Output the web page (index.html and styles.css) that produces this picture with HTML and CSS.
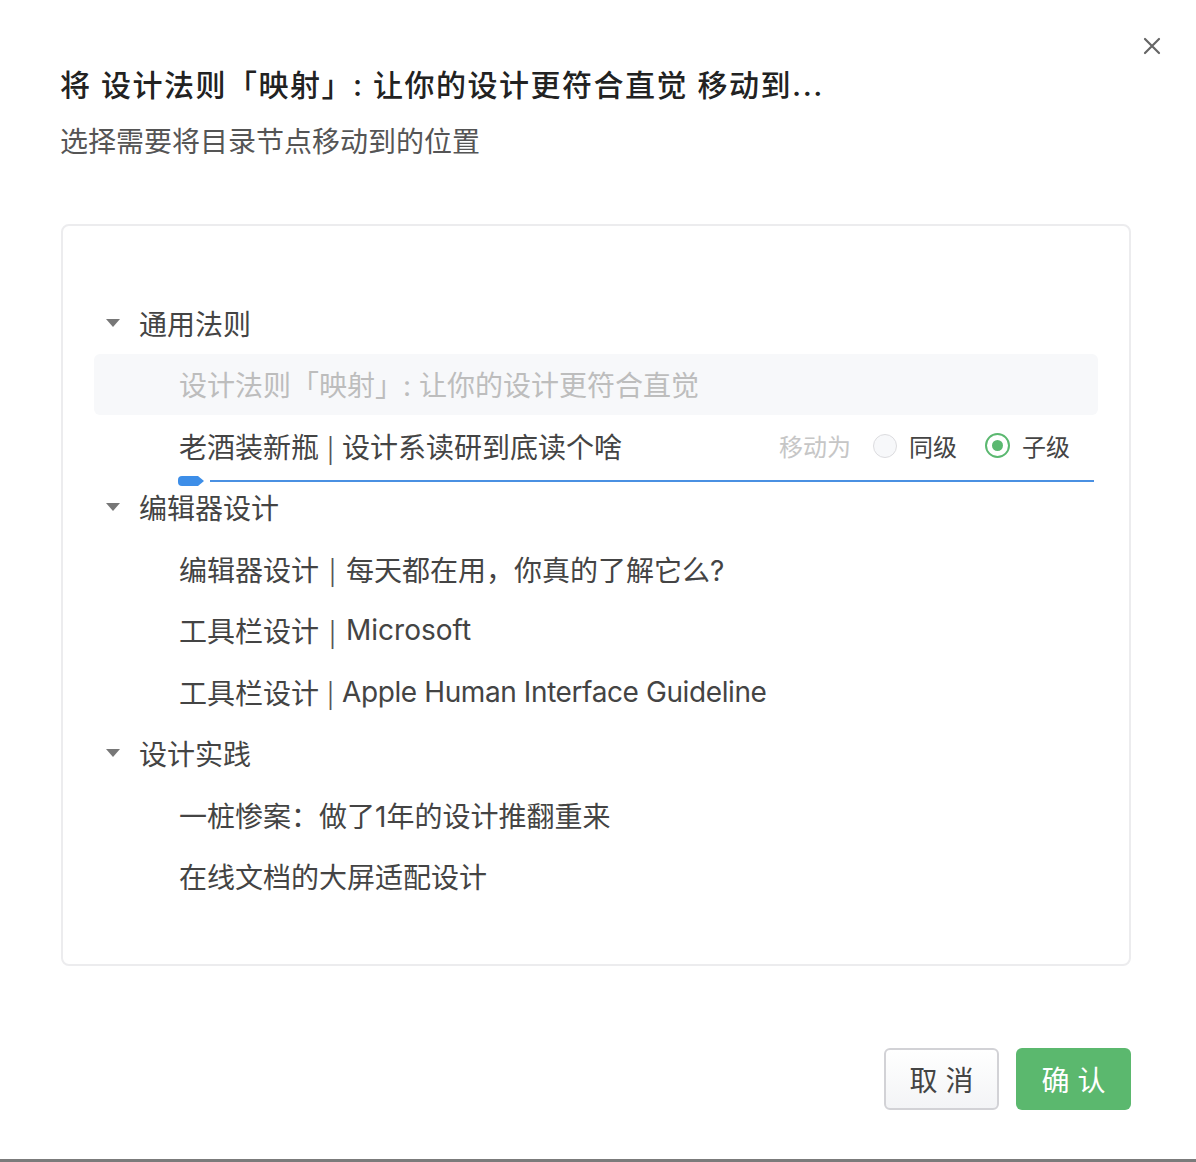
FILE: index.html
```html
<!DOCTYPE html>
<html>
<head>
  <meta charset="UTF-8">
  <title>移动目录节点</title>
  <link rel="stylesheet" href="styles.css">
</head>
<body>
  <div class="dialog">
    <!-- close -->
    <button class="close" aria-label="关闭">
      <svg width="18" height="18" viewBox="0 0 18 18"><path d="M2 2L16 16M16 2L2 16" stroke="#666" stroke-width="2.2" stroke-linecap="round"/></svg>
    </button>

    <h1 class="title">将 设计法则「映射」: 让你的设计更符合直觉 移动到...</h1>
    <p class="subtitle">选择需要将目录节点移动到的位置</p>

    <!-- tree -->
    <div class="panel">
      <div class="tree">
        <div class="row group"><span class="caret"></span>通用法则</div>
        <div class="row child current">设计法则「映射」: 让你的设计更符合直觉</div>
        <div class="row child target">
          <span class="label">老酒装新瓶<span class="sep">|</span>设计系读研到底读个啥</span>
          <div class="move-as">
            <span class="hint">移动为</span>
            <label class="radio"><span class="dot"></span>同级</label>
            <label class="radio checked"><span class="dot"></span>子级</label>
          </div>
          <div class="drop-line"><span class="marker"></span><span class="line"></span></div>
        </div>
        <div class="row group"><span class="caret"></span>编辑器设计</div>
        <div class="row child">编辑器设计<span class="sep wide">|</span>每天都在用，你真的了解它么?</div>
        <div class="row child">工具栏设计<span class="sep wide">|</span>Microsoft</div>
        <div class="row child">工具栏设计<span class="sep">|</span><span class="latin">Apple Human Interface Guideline</span></div>
        <div class="row group"><span class="caret"></span>设计实践</div>
        <div class="row child">一桩惨案：做了1年的设计推翻重来</div>
        <div class="row child">在线文档的大屏适配设计</div>
      </div>
    </div>

    <!-- footer -->
    <div class="footer">
      <button class="btn cancel">取 消</button>
      <button class="btn ok">确 认</button>
    </div>
  </div>
</body>
</html>
```

FILE: styles.css
```css
/* --- Base --- */
html,body{margin:0;padding:0;background:#fff;}
body{font-family:Inter,"Noto Sans CJK SC","Noto Sans",sans-serif;color:#333;}
.dialog{position:relative;height:1162px;box-sizing:border-box;padding:65px 65px 0 60px;border-bottom:3px solid #7b7b7b;}
/* --- Header --- */
.close{position:absolute;top:37px;right:35px;width:18px;height:18px;padding:0;border:none;background:none;cursor:pointer;}
.title{margin:0;font-size:30px;line-height:40px;font-weight:500;color:#222;letter-spacing:1.5px;}
.subtitle{margin:17px 0 0;font-size:28px;line-height:40px;color:#555;}
/* --- Panel / tree --- */
.panel{margin:62px 0 0 1px;height:742px;box-sizing:border-box;border:2px solid #ececee;border-radius:8px;padding:66px 31px 0 31px;}
.row{position:relative;display:flex;align-items:center;height:61.5px;font-size:28px;color:#444;border-radius:6px;}
.row.group{padding-left:12px;}
.row.child{padding-left:85px;}
.sep{font-family:"Noto Sans CJK SC",sans-serif;font-size:26px;color:#555;margin:0 8px;}
.sep.wide{margin:0 10px;}
.latin{letter-spacing:-0.4px;}
.caret{display:inline-block;width:0;height:0;border-left:7px solid transparent;border-right:7px solid transparent;border-top:8px solid #777;margin-right:19px;}
.row.current{background:#f7f8fa;color:#bdbdbd;}
.target .label{flex:1;}
.move-as{display:flex;align-items:center;font-size:24px;color:#444;padding-right:28px;}
.move-as .hint{color:#c6c6c6;margin-right:22px;}
.radio{display:flex;align-items:center;margin-right:28px;}
.radio:last-child{margin-right:0;}
.dot{width:22px;height:22px;border:1.5px solid #dcdcdf;border-radius:50%;background:#f7f8fa;margin-right:12px;box-sizing:content-box;position:relative;}
.radio.checked .dot{border:2px solid #5bb870;background:#fff;width:21px;height:21px;}
.radio.checked .dot::after{content:"";position:absolute;left:5px;top:5px;width:11px;height:11px;border-radius:50%;background:#5bb870;}
/* drop indicator */
.drop-line{position:absolute;left:84px;right:4px;bottom:-9px;height:10px;display:flex;align-items:center;}
.marker{width:20px;height:10px;background:#3d8ee8;border-radius:4px 0 0 4px;position:relative;}
.marker::after{content:"";position:absolute;right:-6px;top:0;border-top:5px solid transparent;border-bottom:5px solid transparent;border-left:6px solid #3d8ee8;}
.line{flex:1;height:2px;background:#4a90e2;margin-left:12px;}
/* --- Footer --- */
.footer{display:flex;justify-content:flex-end;gap:17px;margin-top:82px;}
.btn{height:62px;border-radius:6px;font-family:inherit;font-size:28px;cursor:pointer;padding:0;}
.btn.cancel{width:115px;border:2px solid #d2d2d6;background:linear-gradient(#fff,#f3f4f6);color:#444;}
.btn.ok{width:115px;border:none;background:#5bb86e;color:#fff;}
```
